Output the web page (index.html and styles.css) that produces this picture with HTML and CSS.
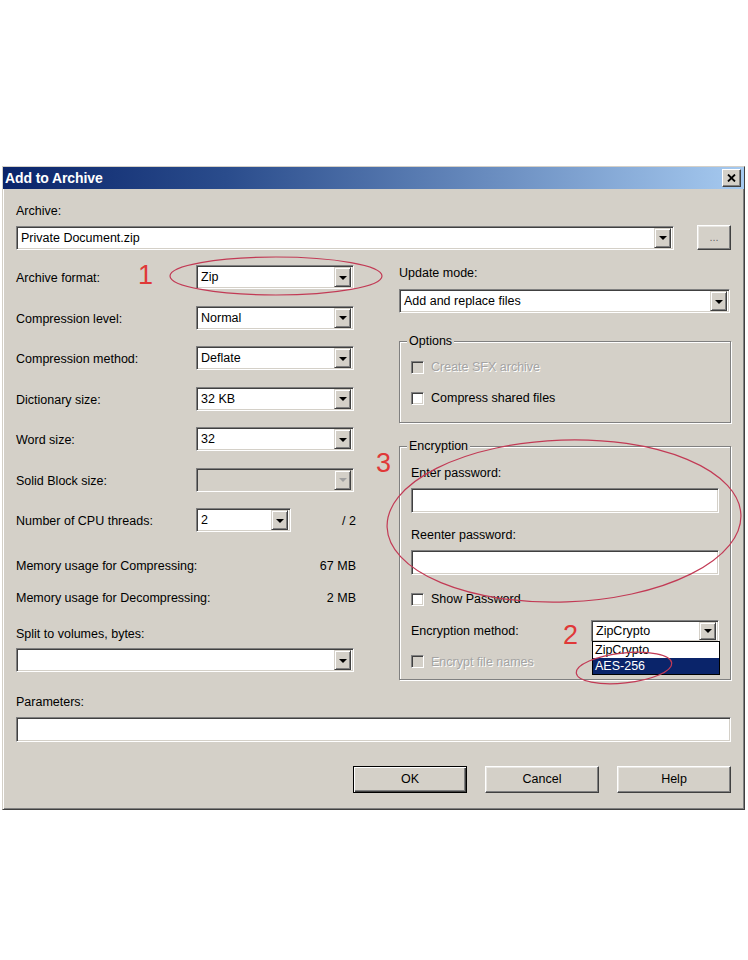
FILE: index.html
```html
<!DOCTYPE html>
<html>
<head>
<meta charset="utf-8">
<title>Add to Archive</title>
<link rel="stylesheet" href="styles.css">
</head>
<body>
<div class="dialog">
  <div class="titlebar">
    <span class="title">Add to Archive</span>
    <span class="close"><svg width="9" height="8" viewBox="0 0 9 8"><path d="M1 0.5 L8 7.5 M8 0.5 L1 7.5" stroke="#000" stroke-width="1.8" fill="none"/></svg></span>
  </div>
  <div class="content">
    <div class="label lbl-archive">Archive:</div>
    <div class="archive-row">
      <div class="combo combo-archive"><span class="val">Private Document.zip</span><span class="drop"><i class="arrow"></i></span></div>
      <div class="btn btn-browse">...</div>
    </div>

    <div class="columns">
      <div class="col-left">
        <div class="frow"><span class="flabel">Archive format:</span><div class="combo w158"><span class="val">Zip</span><span class="drop"><i class="arrow"></i></span></div></div>
        <div class="frow"><span class="flabel">Compression level:</span><div class="combo w158"><span class="val">Normal</span><span class="drop"><i class="arrow"></i></span></div></div>
        <div class="frow"><span class="flabel">Compression method:</span><div class="combo w158"><span class="val">Deflate</span><span class="drop"><i class="arrow"></i></span></div></div>
        <div class="frow"><span class="flabel">Dictionary size:</span><div class="combo w158"><span class="val">32 KB</span><span class="drop"><i class="arrow"></i></span></div></div>
        <div class="frow"><span class="flabel">Word size:</span><div class="combo w158"><span class="val">32</span><span class="drop"><i class="arrow"></i></span></div></div>
        <div class="frow"><span class="flabel">Solid Block size:</span><div class="combo w158 combo-disabled"><span class="val"></span><span class="drop"><i class="arrow"></i></span></div></div>
        <div class="frow"><span class="flabel">Number of CPU threads:</span><div class="combo w95"><span class="val">2</span><span class="drop"><i class="arrow"></i></span></div><span class="of">/ 2</span></div>
        <div class="mem mem1"><span>Memory usage for Compressing:</span><span>67 MB</span></div>
        <div class="mem mem2"><span>Memory usage for Decompressing:</span><span>2 MB</span></div>
        <div class="label split-label">Split to volumes, bytes:</div>
        <div class="combo combo-split"><span class="val"></span><span class="drop"><i class="arrow"></i></span></div>
      </div>

      <div class="col-right">
        <div class="label update-label">Update mode:</div>
        <div class="combo combo-update"><span class="val">Add and replace files</span><span class="drop"><i class="arrow"></i></span></div>

        <div class="group group-options">
          <span class="group-title">Options</span>
          <div class="check check-sfx disabled"><span class="box"></span><span>Create SFX archive</span></div>
          <div class="check check-shared"><span class="box"></span><span>Compress shared files</span></div>
        </div>

        <div class="group group-enc">
          <span class="group-title">Encryption</span>
          <div class="label enc-label1">Enter password:</div>
          <div class="field pw"></div>
          <div class="label enc-label2">Reenter password:</div>
          <div class="field pw"></div>
          <div class="check check-show"><span class="box"></span><span>Show Password</span></div>
          <div class="method-row">
            <span>Encryption method:</span>
            <div class="combo combo-method">
              <span class="val">ZipCrypto</span><span class="drop"><i class="arrow"></i></span>
              <div class="dropdown-list">
                <div class="opt">ZipCrypto</div>
                <div class="opt opt-selected">AES-256</div>
              </div>
            </div>
          </div>
          <div class="check check-names disabled"><span class="box"></span><span>Encrypt file names</span></div>
        </div>
      </div>
    </div>

    <div class="label params-label">Parameters:</div>
    <div class="field params"></div>

    <div class="buttons">
      <div class="btn btn-main btn-default">OK</div>
      <div class="btn btn-main">Cancel</div>
      <div class="btn btn-main">Help</div>
    </div>
  </div>
</div>

<svg class="annot" width="748" height="960" viewBox="0 0 748 960">
  <ellipse cx="276" cy="276" rx="106" ry="19" fill="none" stroke="#c23a55" stroke-width="1.2"/>
  <ellipse cx="564" cy="521" rx="177" ry="81" fill="none" stroke="#c23a55" stroke-width="1.2" transform="rotate(-2 564 521)"/>
  <ellipse cx="624" cy="668" rx="48" ry="15" fill="none" stroke="#c23a55" stroke-width="1.2" transform="rotate(-6 624 668)"/>
  <text x="138" y="284" class="num">1</text>
  <text x="376" y="472" class="num">3</text>
  <text x="563" y="644" class="num">2</text>
</svg>
</body>
</html>
```

FILE: styles.css
```css
* { box-sizing: border-box; }

body {
  margin: 0;
  background: #fff;
  font-family: "Liberation Sans", Arial, sans-serif;
  font-size: 12.5px;
  color: #000;
  position: relative;
  width: 748px;
  height: 960px;
  overflow: hidden;
}

.dialog {
  margin: 166px 0 0 2px;
  width: 743px;
  height: 644px;
  background: #d4d0c8;
  border: 1px solid;
  border-color: #d4d0c8 #404040 #404040 #d4d0c8;
  box-shadow: inset 1px 1px #fff, inset -1px -1px #808080;
}

.titlebar {
  height: 22px;
  display: flex;
  align-items: center;
  justify-content: space-between;
  padding: 0 3px 0 2px;
  background: linear-gradient(to right, #0a246a 0%, #2a4c8c 30%, #a6caf0 100%);
}

.title {
  color: #fff;
  font-weight: bold;
  font-size: 14px;
  letter-spacing: -0.1px;
}

.close {
  width: 19px;
  height: 18px;
  background: #d4d0c8;
  border: 1px solid;
  border-color: #fff #404040 #404040 #fff;
  box-shadow: inset -1px -1px #808080;
  display: flex;
  align-items: center;
  justify-content: center;
}

.content {
  padding: 0 13px;
}

.label {
  line-height: 15px;
  height: 15px;
  white-space: nowrap;
}

.lbl-archive { margin-top: 15px; }

.archive-row {
  margin-top: 6px;
  height: 25px;
  display: flex;
  align-items: center;
  gap: 23px;
}

.combo, .field {
  background: #fff;
  border: 1px solid;
  border-color: #808080 #fff #fff #808080;
  box-shadow: inset 1px 1px #404040, inset -1px -1px #d4d0c8;
}

.combo {
  height: 24px;
  display: flex;
  align-items: center;
  padding: 2px;
  position: relative;
}

.combo .val {
  flex: 1;
  padding-left: 2px;
  white-space: nowrap;
  overflow: hidden;
}

.drop {
  width: 17px;
  height: 20px;
  background: #d4d0c8;
  border: 1px solid;
  border-color: #d4d0c8 #404040 #404040 #d4d0c8;
  box-shadow: inset 1px 1px #fff, inset -1px -1px #808080;
  display: flex;
  align-items: center;
  justify-content: center;
}

.arrow {
  width: 0;
  height: 0;
  border-left: 4px solid transparent;
  border-right: 4px solid transparent;
  border-top: 4px solid #000;
  margin-top: 1px;
}

.combo-archive { width: 658px; }

.btn {
  background: #d4d0c8;
  border: 1px solid;
  border-color: #fff #404040 #404040 #fff;
  box-shadow: inset -1px -1px #808080, inset 1px 1px #e8e6e2;
  display: flex;
  align-items: center;
  justify-content: center;
}

.btn-browse {
  width: 34px;
  height: 25px;
  color: #6a6a6a;
  font-size: 11px;
  padding-bottom: 2px;
}

.columns {
  display: flex;
  gap: 43px;
  margin-top: 15px;
}

.col-left {
  width: 340px;
  display: flex;
  flex-direction: column;
}

.col-right {
  width: 332px;
  display: flex;
  flex-direction: column;
}

.frow {
  display: flex;
  align-items: center;
  height: 24px;
}

.frow + .frow { margin-top: 16.5px; }

.flabel {
  width: 180px;
  white-space: nowrap;
  padding-top: 2px;
}

.w158 { width: 158px; }
.w95 { width: 95px; }

.combo-disabled { background: #d4d0c8; }
.combo-disabled .arrow { border-top-color: #a0a0a0; }

.of { margin-left: auto; padding-top: 2px; }

.mem {
  display: flex;
  justify-content: space-between;
  line-height: 15px;
  white-space: nowrap;
}

.mem1 { margin-top: 27px; }
.mem2 { margin-top: 17px; }
.split-label { margin-top: 21px; }
.combo-split { margin-top: 6px; width: 338px; }

.update-label { margin-top: 1px; }
.combo-update { margin-top: 8px; width: 331px; }

.group {
  width: 332px;
  border: 1px solid #808080;
  box-shadow: inset 1px 1px #fff, 1px 1px #fff;
  display: flex;
  flex-direction: column;
}

.group-title {
  align-self: flex-start;
  margin: -8px 0 0 -4px;
  padding: 0 2px;
  line-height: 15px;
  height: 15px;
  background: #d4d0c8;
}

.group-options {
  margin-top: 28px;
  padding: 0 0 16px 11px;
}

.check {
  display: flex;
  align-items: center;
  gap: 7px;
  height: 16px;
  white-space: nowrap;
}

.box {
  width: 13px;
  height: 13px;
  background: #fff;
  border: 1px solid;
  border-color: #808080 #fff #fff #808080;
  box-shadow: inset 1px 1px #404040, inset -1px -1px #d4d0c8;
}

.check.disabled { color: #a4a4a4; text-shadow: 1px 1px 0 #fff; }
.check.disabled .box { background: #d4d0c8; }

.check-sfx { margin-top: 10px; }
.check-shared { margin-top: 15px; }

.group-enc {
  margin-top: 23px;
  padding: 0 11px 9px 11px;
}

.enc-label1 { margin-top: 12px; }
.enc-label2 { margin-top: 14.5px; }

.field.pw {
  margin-top: 7px;
  height: 25px;
}

.check-show { margin-top: 16.5px; }

.method-row {
  margin-top: 12.5px;
  height: 22px;
  display: flex;
  align-items: center;
  justify-content: space-between;
}

.combo-method {
  width: 128px;
  height: 22px;
}

.combo-method .drop { height: 18px; }

.dropdown-list {
  position: absolute;
  top: 100%;
  left: 0;
  width: 128px;
  background: #fff;
  border: 1px solid #000;
  z-index: 2;
}

.opt {
  height: 16px;
  line-height: 16px;
  padding-left: 2px;
}

.opt-selected {
  background: #0a246a;
  color: #fff;
}

.check-names { margin-top: 12px; }

.params-label { margin-top: 15px; }

.field.params {
  margin-top: 7px;
  height: 25px;
  width: 715px;
}

.buttons {
  margin-top: 24px;
  display: flex;
  justify-content: flex-end;
  gap: 18px;
}

.btn-main {
  width: 114px;
  height: 27px;
}

.btn-default {
  border: 1px solid #000;
  box-shadow: inset 1px 1px #fff, inset -1px -1px #404040, inset -2px -2px #808080;
}

.annot {
  position: absolute;
  top: 0;
  left: 0;
  pointer-events: none;
  z-index: 5;
}

.num {
  font-family: "Liberation Sans", Arial, sans-serif;
  font-size: 27px;
  fill: #e03838;
}
```
